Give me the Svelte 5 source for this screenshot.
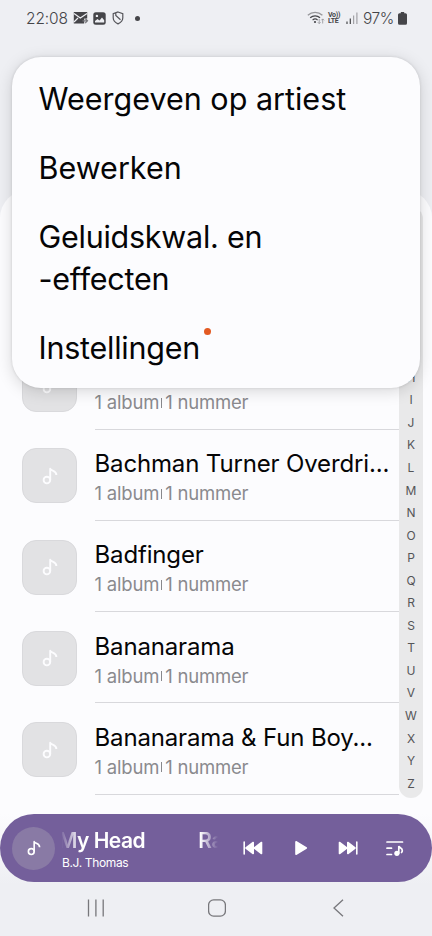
<script lang="ts">
	const menuItems = [
		{ lines: ['Weergeven op artiest'] },
		{ lines: ['Bewerken'] },
		{ lines: ['Geluidskwal. en', '-effecten'] },
		{ lines: ['Instellingen'], badge: true }
	];

	const artists = [
		'Bachman',
		'Bachman Turner Overdri...',
		'Badfinger',
		'Bananarama',
		'Bananarama & Fun Boy...'
	];

	const letters = 'ABCDEFGHIJKLMNOPQRSTUVWXYZ'.split('');
</script>

{#snippet note()}
	<svg class="note" viewBox="0 0 16 18" aria-hidden="true">
		<circle cx="4.9" cy="13.1" r="3.3" />
		<path d="M8.2 13.1V1.8c.8 2.400 6.200 1.500 6.200 6.200" />
	</svg>
{/snippet}

<div class="screen">
	<header class="status">
		<span class="clock">22:08</span>
		<svg class="mail" viewBox="0 0 16 14" aria-hidden="true">
			<path d="M.8 1h13.400v6.500h-3v5H.8z" fill="#454549" />
			<path d="M1 2.500l6.300 4.500L14 2.500M1 11l4-4" fill="none" stroke="#eeeff3" stroke-width="1.200" />
			<path d="M9.500 9.800h5M12.200 7.500l2.300 2.300-2.300 2.300" fill="none" stroke="#77777c" stroke-width="1.200" />
		</svg>
		<svg class="picture" viewBox="0 0 13 13" aria-hidden="true">
			<rect x=".3" y=".3" width="12.400" height="12.400" rx="2.500" fill="#454549" />
			<circle cx="3.900" cy="3.900" r="1.200" fill="#eeeff3" />
			<path d="M2 10.500V9l2.500-2 2 1.600L9 5.500l2.200 2.700v2.300z" fill="#eeeff3" />
		</svg>
		<svg class="shield" viewBox="0 0 12 14" aria-hidden="true">
			<path d="M6 1l4.800 1.700v4c0 2.800-2 4.800-4.800 6.200-2.800-1.400-4.800-3.400-4.800-6.200v-4zM3.800 2v2.500l4.700 4.300" />
		</svg>
		<span class="more"></span>

		<div class="signals">
			<svg class="wifi" viewBox="0 0 18 14" aria-hidden="true">
				<path d="M.8 4.300c4.200-4 10.400-4 14.600 0" stroke="#96969a" />
				<path d="M3.200 6.800c2.800-2.700 7-2.700 9.800 0M5.600 9.100c1.500-1.400 3.500-1.400 5 0" stroke="#454549" />
				<circle cx="8" cy="11" r="1.100" fill="#454549" />
				<path d="M12.200 8v4.500M10.800 11.200l1.400 1.400 1.400-1.400M15.700 12.500V8M14.300 9.300l1.400-1.400 1.400 1.400" stroke="#909095" stroke-width=".8" />
			</svg>
			<span class="volte"><span>Vo))</span><span>LTE</span></span>
			<svg class="bars" viewBox="0 0 12 12" aria-hidden="true">
				<path d="M1 9.500V12M4.300 6.500V12" stroke="#454549" />
				<path d="M7.600 3.500V12M10.900.500V12" stroke="#a2a2a6" />
			</svg>
			<span class="percent">97%</span>
			<svg class="battery" viewBox="0 0 9 13" aria-hidden="true">
				<path d="M2.800 0h3.400v1.200H7.500Q9 1.200 9 2.700v8.600Q9 12.800 7.500 12.800h-6Q0 12.800 0 11.300V2.700Q0 1.200 1.500 1.200h1.300z" />
			</svg>
		</div>
	</header>

	<main class="sheet">
		<ul class="artists">
			{#each artists as name}
				<li class="artist">
					<div class="cover">{@render note()}</div>
					<div class="details">
						<span class="name">{name}</span>
						<span class="meta">1 album<i></i>1 nummer</span>
					</div>
				</li>
			{/each}
		</ul>
		<nav class="index">
			{#each letters as letter}
				<span>{letter}</span>
			{/each}
		</nav>
	</main>

	<section class="player">
		<div class="disc">{@render note()}</div>
		<div class="track">
			<div class="title"><span>My Head</span><span>Rai</span></div>
			<span class="by">B.J. Thomas</span>
		</div>
		<svg class="control prev" viewBox="0 0 20 16" aria-hidden="true">
			<path d="M1.200 2v12" />
			<path class="solid" d="M10.200 2.500v11L3 8zM18.500 2.500v11L11.300 8z" />
		</svg>
		<svg class="control play" viewBox="0 0 14 16" aria-hidden="true">
			<path class="solid" d="M2 1.800v12.400L12.300 8z" />
		</svg>
		<svg class="control next" viewBox="0 0 20 16" aria-hidden="true">
			<path d="M18.800 2v12" />
			<path class="solid" d="M9.800 2.500v11L17 8zM1.500 2.500v11L8.700 8z" />
		</svg>
		<svg class="queue" viewBox="0 0 18 17" aria-hidden="true">
			<path d="M1 2h15.500M1 8.200h4.500M1 14.500h4.500M12.800 13V6c.5 2 3.500 1.500 3.500 4.500 0 1-.3 1.500-.8 2" />
			<circle cx="10.900" cy="13.300" r="2.600" />
		</svg>
	</section>

	<footer class="navbar">
		<svg viewBox="0 0 18 18" aria-hidden="true"><path d="M1.500.500v17M8.900.500v17M16.200.500v17" /></svg>
		<svg viewBox="0 0 18 18" aria-hidden="true"><rect x=".6" y=".9" width="16.800" height="16.200" rx="5" /></svg>
		<svg viewBox="0 0 18 18" aria-hidden="true"><path d="M14 .7L5 9l9 8.300" /></svg>
	</footer>

	<div class="menu">
		{#each menuItems as item}
			<div class="item">
				{#each item.lines as line}
					<span>{line}</span>
				{/each}
				{#if item.badge}<b class="badge"></b>{/if}
			</div>
		{/each}
	</div>
</div>

<style>
	:global(body) {
		margin: 0;
	}

	.screen {
		position: relative;
		display: flex;
		flex-direction: column;
		width: 432px;
		height: 936px;
		overflow: hidden;
		background: #eeeff3;
		color: #050506;
		font-family: Inter, 'Liberation Sans', sans-serif;
	}

	.status {
		display: flex;
		align-items: center;
		height: 36px;
		box-sizing: border-box;
		padding: 0 25px 0 26px;
		color: #454549;
		font-size: 15.500px;
		font-weight: 300;
		flex-shrink: 0;
	}

	.clock {
		width: 47px;
		letter-spacing: -0.1px;
	}

	.mail {
		width: 16px;
		height: 14px;
	}

	.picture {
		width: 13px;
		height: 13px;
		margin-left: 4px;
	}

	.shield {
		width: 12px;
		height: 14px;
		margin-left: 6px;
		fill: none;
		stroke: #55555a;
		stroke-width: 1.2;
	}

	.more {
		width: 5px;
		height: 5px;
		margin-left: 11px;
		border-radius: 50%;
		background: #454549;
	}

	.signals {
		display: flex;
		align-items: center;
		margin-left: auto;
	}

	.wifi {
		width: 18px;
		height: 14px;
		fill: none;
		stroke-width: 1.2;
	}

	.volte {
		display: flex;
		flex-direction: column;
		width: 13px;
		margin-left: 3px;
		font-family: Roboto, sans-serif;
		font-size: 7px;
		font-weight: 700;
		line-height: 6.500px;
		letter-spacing: -0.3px;
	}

	.bars {
		width: 12px;
		height: 12px;
		margin: 0 5px 0 5px;
		stroke-width: 1.2;
	}

	.percent {
		width: 33px;
		letter-spacing: -0.5px;
	}

	.battery {
		width: 9px;
		height: 13px;
		margin-left: 2px;
		fill: #454549;
	}

	.sheet {
		display: flex;
		justify-content: space-between;
		box-sizing: border-box;
		height: 704px;
		margin-top: 154px;
		padding-right: 9px;
		border-radius: 28px 28px 0 0;
		background: linear-gradient(#fcfcfe 624px, #eeeff3 694px);
		flex-shrink: 0;
	}

	.artists {
		width: 399px;
		margin: 0;
		padding: 148.600px 0 0;
		list-style: none;
	}

	.artist {
		display: flex;
		height: 91.200px;
		padding-left: 22px;
	}

	.cover {
		display: flex;
		align-items: center;
		justify-content: center;
		box-sizing: border-box;
		width: 55px;
		height: 55px;
		margin-top: 18.700px;
		border: 1px solid #d9d9dc;
		border-radius: 14px;
		background: #e2e2e4;
		color: #fcfcfe;
	}

	.note {
		width: 16px;
		height: 18px;
		fill: none;
		stroke: currentColor;
		stroke-width: 1.9;
		stroke-linejoin: round;
	}

	.details {
		display: flex;
		flex: 1;
		flex-direction: column;
		box-sizing: border-box;
		margin-left: 18px;
		padding-top: 18.500px;
		border-bottom: 1px solid #d8d8dc;
		white-space: nowrap;
	}

	.name {
		margin-left: -0.500px;
		font-size: 24px;
		line-height: 32px;
		letter-spacing: -0.150px;
	}

	.meta {
		display: flex;
		align-items: center;
		margin-left: -0.500px;
		color: #8a8a8e;
		font-size: 18.500px;
		line-height: 27px;
		letter-spacing: -0.200px;
	}

	.meta i {
		width: 1px;
		height: 10px;
		margin: 0 3px 0 2px;
		background: #88888c;
	}

	.index {
		display: flex;
		flex-direction: column;
		box-sizing: border-box;
		width: 24px;
		height: 591px;
		margin-top: 17px;
		padding-top: 2px;
		border-radius: 12px;
		background: #e9e9ea;
		color: #555558;
		font-size: 12px;
		line-height: 22.540px;
		text-align: center;
	}

	.player {
		position: absolute;
		top: 814px;
		left: 0;
		display: flex;
		align-items: center;
		box-sizing: border-box;
		width: 432px;
		height: 68px;
		padding-left: 12px;
		border-radius: 34px;
		background: #745f9b;
		color: #fff;
	}

	.disc {
		display: flex;
		align-items: center;
		justify-content: center;
		width: 43px;
		height: 43px;
		border-radius: 50%;
		background: #897aa5;
	}

	.disc .note {
		width: 14px;
		height: 16px;
	}

	.track {
		width: 156px;
		margin: 2px 0 0 7px;
		overflow: hidden;
	}

	.title {
		display: flex;
		justify-content: space-between;
		box-sizing: border-box;
		width: 170px;
		margin-left: -4px;
		font-size: 21px;
		font-weight: 600;
		line-height: 27px;
		letter-spacing: -0.500px;
		mask-image: linear-gradient(90deg, transparent 2px, #000 22px, #000 142px, transparent 160px);
	}

	.by {
		display: block;
		font-size: 12px;
		line-height: 17px;
		letter-spacing: -0.350px;
	}

	.control {
		height: 16px;
		fill: none;
		stroke: #fff;
		stroke-width: 1.6;
		stroke-linecap: round;
		stroke-linejoin: round;
	}

	.control .solid {
		fill: #fff;
	}

	.prev,
	.next {
		width: 20px;
	}

	.prev {
		margin-left: 24.500px;
	}

	.play {
		width: 14px;
		margin: 0 30px 0 31px;
	}

	.queue {
		width: 18px;
		height: 17px;
		margin-left: 28px;
		fill: none;
		stroke: #fff;
		stroke-width: 1.7;
		stroke-linecap: round;
	}

	.queue circle {
		fill: #fff;
		stroke: none;
	}

	.navbar {
		display: flex;
		gap: 103px;
		padding: 5px 0 0 87px;
	}

	.navbar svg {
		width: 18px;
		height: 18px;
		fill: none;
		stroke: #77777b;
		stroke-width: 1.3;
	}

	.menu {
		position: absolute;
		top: 57px;
		left: 12px;
		box-sizing: border-box;
		width: 408px;
		height: 331px;
		padding: 20.500px 26.500px;
		border-radius: 29px;
		background: #fcfcfe;
		box-shadow:
			0 0 3px rgba(0, 0, 0, 0.12),
			0 3px 16px rgba(0, 0, 0, 0.15);
	}

	.item {
		position: relative;
		display: flex;
		flex-direction: column;
		width: fit-content;
		margin-bottom: 27px;
		font-size: 30.500px;
		line-height: 42px;
		white-space: nowrap;
	}

	.item:nth-child(n + 3) {
		letter-spacing: -0.250px;
	}

	.badge {
		position: absolute;
		top: 1px;
		right: -11px;
		width: 7px;
		height: 7px;
		border-radius: 50%;
		background: #e35a22;
	}
</style>
